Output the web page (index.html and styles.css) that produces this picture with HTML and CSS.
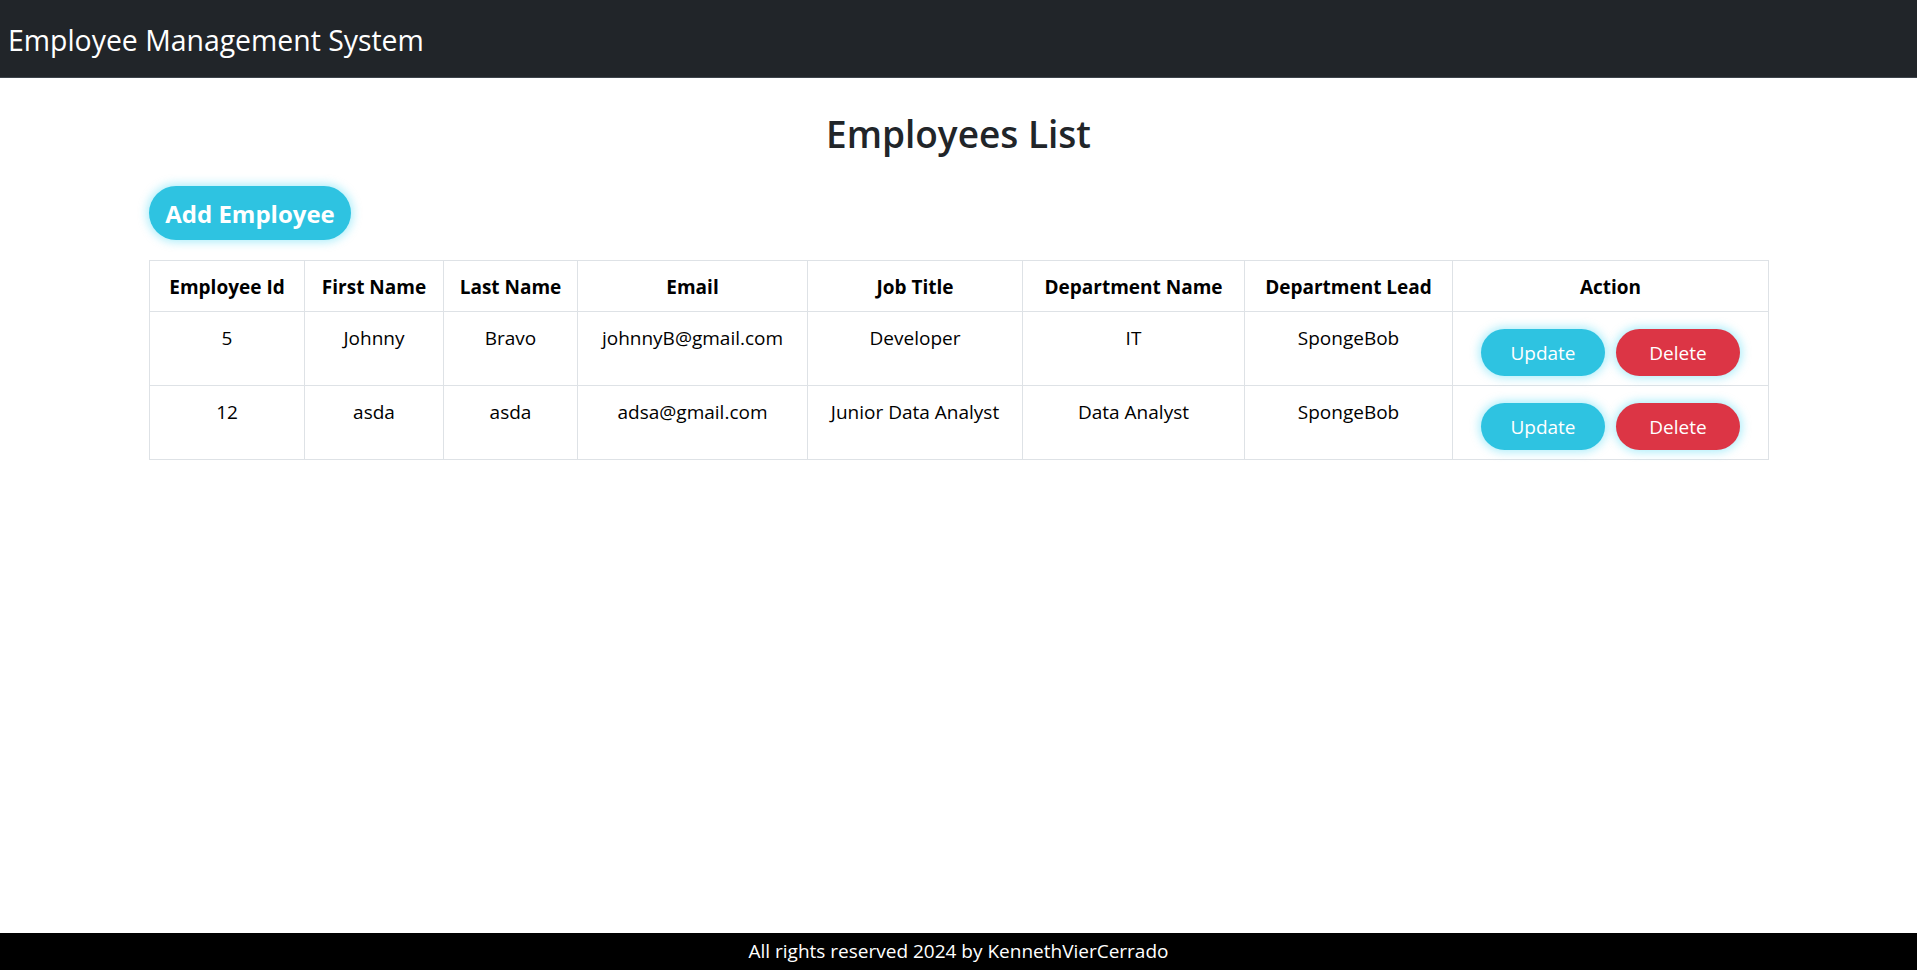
FILE: index.html
```html
<!DOCTYPE html>
<html lang="en">
<head>
<meta charset="utf-8">
<title>Employee Management System</title>
<link rel="stylesheet" href="styles.css">
</head>
<body>
<div class="page">
  <header class="navbar">
    <span class="brand">Employee Management System</span>
  </header>
  <main class="content">
    <h1 class="title">Employees List</h1>
    <div class="toolbar">
      <button class="btn btn-info btn-add">Add Employee</button>
    </div>
    <table class="emp-table">
      <colgroup>
        <col class="c-id"><col class="c-first"><col class="c-last"><col class="c-email">
        <col class="c-job"><col class="c-dept"><col class="c-lead"><col class="c-action">
      </colgroup>
      <thead>
        <tr>
          <th>Employee Id</th><th>First Name</th><th>Last Name</th><th>Email</th>
          <th>Job Title</th><th>Department Name</th><th>Department Lead</th><th>Action</th>
        </tr>
      </thead>
      <tbody>
        <tr>
          <td>5</td><td>Johnny</td><td>Bravo</td><td>johnnyB@gmail.com</td>
          <td>Developer</td><td>IT</td><td>SpongeBob</td>
          <td class="actions"><button class="btn btn-info btn-row">Update</button><button class="btn btn-danger btn-row">Delete</button></td>
        </tr>
        <tr>
          <td>12</td><td>asda</td><td>asda</td><td>adsa@gmail.com</td>
          <td>Junior Data Analyst</td><td>Data Analyst</td><td>SpongeBob</td>
          <td class="actions"><button class="btn btn-info btn-row">Update</button><button class="btn btn-danger btn-row">Delete</button></td>
        </tr>
      </tbody>
    </table>
  </main>
  <footer class="footer">All rights reserved 2024 by KennethVierCerrado</footer>
</div>
</body>
</html>
```
FILE: styles.css
```css
* { box-sizing: border-box; }
html, body { margin: 0; padding: 0; }
body {
  font-family: "Open Sans", "Noto Sans", sans-serif;
  color: #212529;
  background: #fff;
}
.page {
  min-height: 100vh;
  display: flex;
  flex-direction: column;
}
.navbar {
  height: 78px;
  background: #212529;
  border-bottom: 1px solid #3d444b;
  display: flex;
  align-items: center;
  padding: 0 8px;
}
.brand {
  color: #fff;
  font-size: 28.4px;
  line-height: 1;
  position: relative;
  top: 2px;
}
.content {
  flex: 1;
  width: 1619px;
  margin: 0 auto;
}
.title {
  margin: 34px 0 0;
  text-align: center;
  font-size: 37px;
  font-weight: 600;
  line-height: 1.2;
  color: #212529;
}
.toolbar {
  margin-top: 30px;
  display: flex;
}
.btn {
  font-family: inherit;
  border: none;
  border-radius: 999px;
  color: #fff;
  cursor: pointer;
  box-shadow: 0 0 10px 2px rgba(13, 202, 240, 0.35);
}
.btn-info { background: #2ec3e1; }
.btn-danger { background: #dc3545; }
.btn-add {
  width: 202px;
  height: 54px;
  font-size: 24px;
  font-weight: 700;
  padding: 0;
}
.emp-table {
  margin-top: 20px;
  width: 1619px;
  border-collapse: collapse;
  table-layout: fixed;
  color: #000;
  font-size: 19px;
}
.c-id { width: 155px; }
.c-first { width: 139px; }
.c-last { width: 134px; }
.c-email { width: 230px; }
.c-job { width: 215px; }
.c-dept { width: 222px; }
.c-lead { width: 208px; }
.c-action { width: 316px; }
.emp-table th,
.emp-table td {
  border: 1px solid #dee2e6;
  text-align: center;
  vertical-align: top;
  padding: 12px 6px 8px;
  line-height: 28px;
}
.emp-table th { font-weight: 700; height: 51px; }
.emp-table td { height: 74px; }
.btn-row {
  width: 124px;
  height: 47px;
  margin-top: 5px;
  font-size: 19px;
  padding: 0;
  vertical-align: top;
}
.btn-row + .btn-row { margin-left: 11px; }
.footer {
  height: 37px;
  background: #000;
  color: #fff;
  text-align: center;
  font-size: 19px;
  line-height: 37px;
}
```
